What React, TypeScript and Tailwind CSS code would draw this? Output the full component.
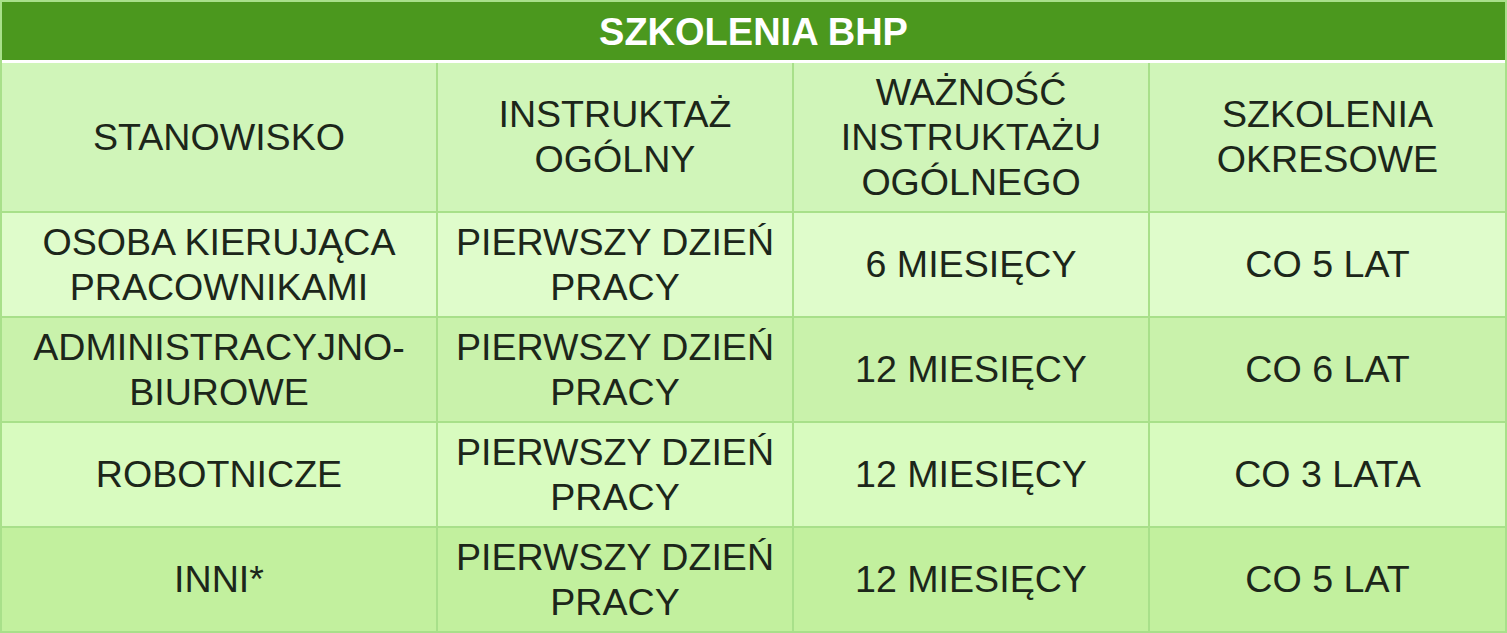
const rows = [
  {
    cells: ["OSOBA KIERUJĄCA PRACOWNIKAMI", "PIERWSZY DZIEŃ PRACY", "6 MIESIĘCY", "CO 5 LAT"],
    bg: "bg-[#dffccb]",
  },
  {
    cells: ["ADMINISTRACYJNO- BIUROWE", "PIERWSZY DZIEŃ PRACY", "12 MIESIĘCY", "CO 6 LAT"],
    bg: "bg-[#c9f2ab]",
  },
  {
    cells: ["ROBOTNICZE", "PIERWSZY DZIEŃ PRACY", "12 MIESIĘCY", "CO 3 LATA"],
    bg: "bg-[#d8fbbf]",
  },
  {
    cells: ["INNI*", "PIERWSZY DZIEŃ PRACY", "12 MIESIĘCY", "CO 5 LAT"],
    bg: "bg-[#c2f09e]",
  },
];

const headers = [
  ["STANOWISKO"],
  ["INSTRUKTAŻ", "OGÓLNY"],
  ["WAŻNOŚĆ", "INSTRUKTAŻU", "OGÓLNEGO"],
  ["SZKOLENIA", "OKRESOWE"],
];

const cols = "grid grid-cols-[436px_356px_356px_1fr]";

const App = () => {
  return (
    <div
      className="w-[1507px] h-[633px] bg-[#a8e08a] p-[2px] text-[#1c261a] overflow-hidden"
      style={{ fontFamily: '"Liberation Sans", Arial, sans-serif' }}
    >
      <div className="h-[58px] bg-[#4b981e] flex items-center justify-center border-b-[3px] border-white box-content">
        <h1 className="text-white font-bold text-[38px] leading-none pt-[1px]">SZKOLENIA BHP</h1>
      </div>

      {/* naglowek */}
      <div className={`${cols} h-[148px] bg-[#d0f5b9]`}>
        {headers.map((lines, i) => (
          <div
            key={i}
            className={`flex flex-col items-center justify-center text-center text-[37.6px] leading-[45px] ${
              i < 3 ? "border-r-2 border-[#a8e08a]" : ""
            }`}
          >
            {lines.map((l) => (
              <span key={l}>{l}</span>
            ))}
          </div>
        ))}
      </div>

      {rows.map((row, r) => (
        <div key={r} className={`${cols} h-[105px] border-t-2 border-[#a8e08a] ${row.bg}`}>
          {row.cells.map((c, i) => (
            <div
              key={i}
              className={`flex items-center justify-center text-center text-[37.6px] leading-[45px] px-2 ${
                i < 3 ? "border-r-2 border-[#a8e08a]" : ""
              }`}
            >
              {c}
            </div>
          ))}
        </div>
      ))}
    </div>
  );
};

export default App;
